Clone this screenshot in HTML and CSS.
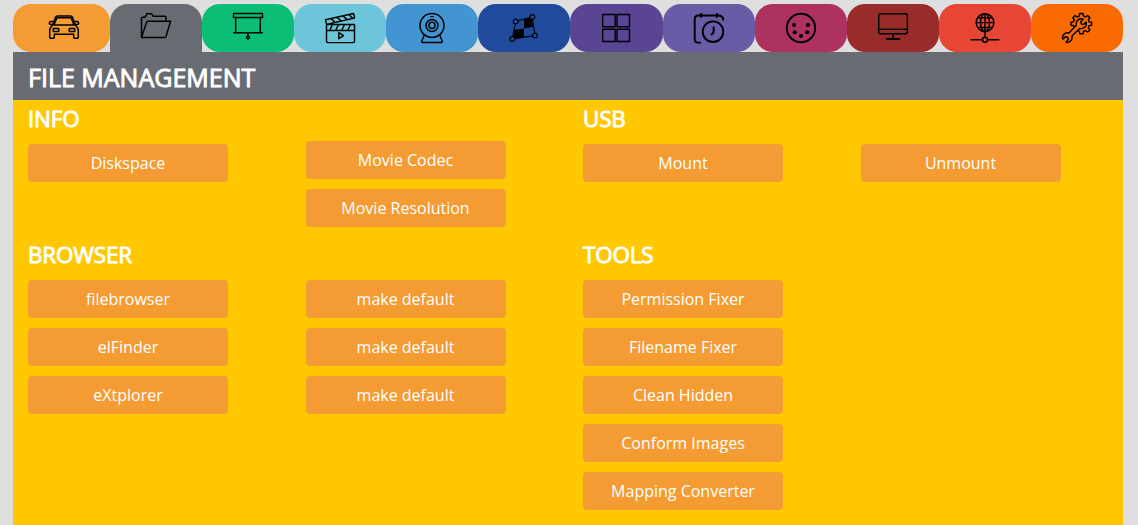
FILE: index.html
```
<!DOCTYPE html>
<html lang="en">
<head>
<meta charset="utf-8">
<title>File Management</title>
<link rel="stylesheet" href="styles.css">
</head>
<body>
<div class="container">
  <nav class="tabs">
    <a class="tab car"><svg class="icon" viewBox="0 0 32 32"><path d="M4.500 13.200 7.500 5.200Q8 3.900 9.500 3.900h13Q24 3.900 24.500 5.200l3 8 2 2.500q.8 1 .8 2.500v7q0 1-1 1h-2.600q-1 0-1-1v-3h-19.400v3q0 1-1 1h-2.600q-1 0-1-1v-7q0-1.500.8-2.500zM6 13 8.700 6.200Q9 5.800 9.500 5.800h13q.6 0 .8.500l2.700 6.700zM4.500 12.400H3q-1.700 0-1.700-1.500T3 9.400h2.500M27.500 12.400H29q1.700 0 1.700-1.500T29 9.400h-2.500"/><rect x="5.200" y="16.500" width="5.600" height="3" rx=".5"/><rect x="21.200" y="16.500" width="5.600" height="3" rx=".5"/></svg></a>
    <a class="tab folder active"><svg class="icon" viewBox="0 0 32 32"><path d="M1.500 25.500V6.200q0-1 1-1h2.800l1.200-2.800q.3-.7 1-.7h3.500q.8 0 1.200.8l.8 1.800h12q1 0 1 1v4M1.500 25.500 6.500 10.500q.4-1.200 1.500-1.200h22.600L26 24.500q-.4 1-1.300 1H1.500z"/></svg></a>
    <a class="tab screen"><svg class="icon" viewBox="0 0 32 32"><path d="M1.500 1.500h29v4h-29zM3.700 5.500v15.200M28.300 5.500v15.200M1 20.700h30M16 20.700v3.500"/><circle cx="16" cy="25.600" r="1.400"/></svg></a>
    <a class="tab movie"><svg class="icon" viewBox="0 0 32 32"><path d="M2.500 12.500h28v16.700q0 1.400-1.400 1.400H4q-1.500 0-1.500-1.400zM2.500 18.400h28M1.400 7.700l28.100-6.200 1.100 4.500-28 6.400zM7 6.600l4 3.600M13 5.200l4 3.700M19 3.900l4 3.600M25 2.600l3.500 3.700M8.500 12.500l-2.700 5.700M14.500 12.500l-2.700 5.700M20.500 12.500l-2.700 5.700M26.500 12.500l-2.700 5.700M14.800 20.700v6l4.700-3z"/></svg></a>
    <a class="tab webcam"><svg class="icon" viewBox="0 0 32 32"><circle cx="16" cy="13.400" r="12"/><circle cx="16" cy="13.400" r="6"/><circle cx="16" cy="13.400" r="3.100"/><path d="M14.300 4.600h3.400M8.300 23l-2.600 6.200q-.3 1.200 1 1.200h18.600q1.300 0 1-1.200L23.700 23"/></svg></a>
    <a class="tab mapping"><svg class="icon" viewBox="0 0 32 32"><path class="thin" d="M10 8.800 22 5.500M24.500 7.500l2.200 13.800M24.600 23.900 6.800 26.600M4.800 24.700 7.300 11.800"/><path class="solid" d="M16 7.300l7-1.800 2.700 9.200-9.700 1.700zM6 18l10-1.600-.2 9-9 1.100-1.700-2z"/><g class="thin"><circle cx="7.700" cy="9.400" r="2.400"/><circle cx="24.300" cy="5" r="2.400"/><circle cx="27" cy="23.600" r="2.400"/><circle cx="4.300" cy="27" r="2.400"/></g></svg></a>
    <a class="tab windows"><svg class="icon" viewBox="0 0 32 32"><path d="M2.700 2.500h12.500v12.300H2.700zM17 2.500h12.500v12.300H17zM2.700 17.200h12.500v12.300H2.700zM17 17.200h12.500v12.300H17z"/></svg></a>
    <a class="tab schedule"><svg class="icon" viewBox="0 0 32 32"><path class="bold" d="M30.300 8.500q0-5-5-5H5.500q-3.800 0-3.800 4V27q0 3.600 3.600 3.600H8M8.200 1v4.700M24 1v4.700M20.700 14.500v4.300q0 2.700-2.700 4"/><circle class="bold" cx="20" cy="19.700" r="10.300"/></svg></a>
    <a class="tab dmx"><svg class="icon" viewBox="0 0 32 32"><circle class="bold" cx="16" cy="16" r="14.200"/><g class="solid"><circle cx="9" cy="13" r="2.100"/><circle cx="23" cy="13" r="2.100"/><circle cx="9.700" cy="20.300" r="2.100"/><circle cx="22.300" cy="20.300" r="2.100"/><circle cx="16" cy="24" r="2.100"/></g></svg></a>
    <a class="tab display"><svg class="icon" viewBox="0 0 32 32"><rect x="1.700" y="1.700" width="28.700" height="20" rx="2"/><path d="M2 17.300h28"/><path class="bold" d="M16 22v5M9 27h14"/></svg></a>
    <a class="tab network"><svg class="icon" viewBox="0 0 32 32"><circle cx="16" cy="10.600" r="8.900"/><ellipse cx="16" cy="10.600" rx="4.500" ry="8.900"/><path d="M16 1.700v23.500M7 10.600h18M8.700 5.700h14.600M8.700 15.500h14.600M1.700 27.700h11.700M18.600 27.700h11.800"/><circle cx="16" cy="27.700" r="2.500"/></svg></a>
    <a class="tab system"><svg class="icon" viewBox="0 0 32 32"><path d="M12.700 14.700 12.400 13.500 10 13.200V10.200L12.400 9.800 13.300 7.700 11.800 5.700 14 3.500 16.100 5 18.300 4 18.700 1.500H22L22.400 4 24.600 5 26.700 3.500 28.900 5.700 27.300 7.700 28.200 9.900 30.600 10.200V13.200L28.200 13.600 27.300 15.800 28.900 17.900 26.700 20 24.600 18.600 22.400 19.500 22 21.800H18.800L18.300 19.500 17 18.900"/><path d="M15.300 13.300Q14.600 9.600 17.300 7.600 19.600 6.200 22.300 7.100L19.800 9.700 20.300 12 22.700 12.500 25.100 10Q26 12.800 24 15 21.800 17.200 18.700 16.400L11 24Q11.600 27.300 9.300 29.300 7.200 31 4.800 30.200L7.300 27.600 6.800 25.200 4.400 24.700 1.900 27.300Q.7 24.500 3 22.200 5.100 20.200 8 21z"/></svg></a>
  </nav>

  <header class="page-header"><h1>FILE MANAGEMENT</h1></header>

  <main class="panel">
    <section class="group">
      <div class="column">
        <h2>INFO</h2>
        <button class="btn">Diskspace</button>
      </div>
      <div class="column raised">
        <button class="btn">Movie Codec</button>
        <button class="btn">Movie Resolution</button>
      </div>
    </section>
    <section class="group">
      <div class="column">
        <h2>USB</h2>
        <button class="btn">Mount</button>
      </div>
      <div class="column untitled">
        <button class="btn">Unmount</button>
      </div>
    </section>
    <section class="group">
      <div class="column">
        <h2>BROWSER</h2>
        <button class="btn">filebrowser</button>
        <button class="btn">elFinder</button>
        <button class="btn">eXtplorer</button>
      </div>
      <div class="column untitled">
        <button class="btn">make default</button>
        <button class="btn">make default</button>
        <button class="btn">make default</button>
      </div>
    </section>
    <section class="group">
      <div class="column">
        <h2>TOOLS</h2>
        <button class="btn">Permission Fixer</button>
        <button class="btn">Filename Fixer</button>
        <button class="btn">Clean Hidden</button>
        <button class="btn">Conform Images</button>
        <button class="btn">Mapping Converter</button>
      </div>
    </section>
  </main>
</div>
</body>
</html>
```
FILE: styles.css
```
* { box-sizing: border-box; }

body {
  margin: 0;
  height: 525px;
  overflow: hidden;
  background: #dfdfdf;
  color: #fff;
  font: 16px/24px "Open Sans", sans-serif;
}

.container {
  width: 1110px;
  height: 525px;
  margin-left: 13px;
  padding-top: 4px;
  display: flex;
  flex-direction: column;
}

.tabs {
  display: grid;
  grid-template-columns: 97px repeat(11, 1fr);
  height: 48px;
  flex: none;
}

.tab {
  display: flex;
  justify-content: center;
  padding-top: 8px;
  border-radius: 18px;
}

.icon {
  width: 32px;
  height: 32px;
  fill: none;
  stroke: #000;
  stroke-width: 1.45;
  stroke-linejoin: round;
}

.icon .thin { stroke-width: 1.1; }
.icon .bold { stroke-width: 1.9; }
.icon .solid { fill: #000; stroke: none; }

.car { background: #f49c33; padding-left: 4px; }
.folder { background: #686c72; }
.active { border-radius: 18px 18px 0 0; }
.screen { background: #0abf75; }
.movie { background: #6cc5d9; }
.webcam { background: #4295d1; }
.mapping { background: #204a9c; }
.windows { background: #594594; }
.schedule { background: #695ba6; }
.dmx { background: #ae3260; }
.display { background: #982c2b; }
.network { background: #e84635; }
.system { background: #f96a00; }

.page-header {
  flex: none;
  height: 48px;
  padding: 0 15px;
  background: #686c72;
}

h1, h2 {
  margin: 0;
  font-weight: 400;
  -webkit-text-stroke: 0.9px #fff;
}

h1 {
  font-size: 25px;
  line-height: 50px;
  letter-spacing: 0;
}

h2 {
  height: 44px;
  padding-top: 4px;
  font-size: 22.4px;
  line-height: 29px;
  letter-spacing: -0.15px;
}

.panel {
  flex: 1;
  display: grid;
  grid-template-columns: 1fr 1fr;
  grid-template-rows: 136px 1fr;
  background: #ffc803;
}

.group {
  display: grid;
  grid-template-columns: 1fr 1fr;
}

.column { padding-left: 15px; }
.raised { padding-top: 41px; }
.untitled { padding-top: 44px; }

.btn {
  display: block;
  width: 200px;
  height: 38px;
  margin: 0 0 10px;
  padding: 0;
  border: 0;
  border-radius: 4px;
  background: #f49c33;
  color: #fff;
  font: inherit;
}
```
